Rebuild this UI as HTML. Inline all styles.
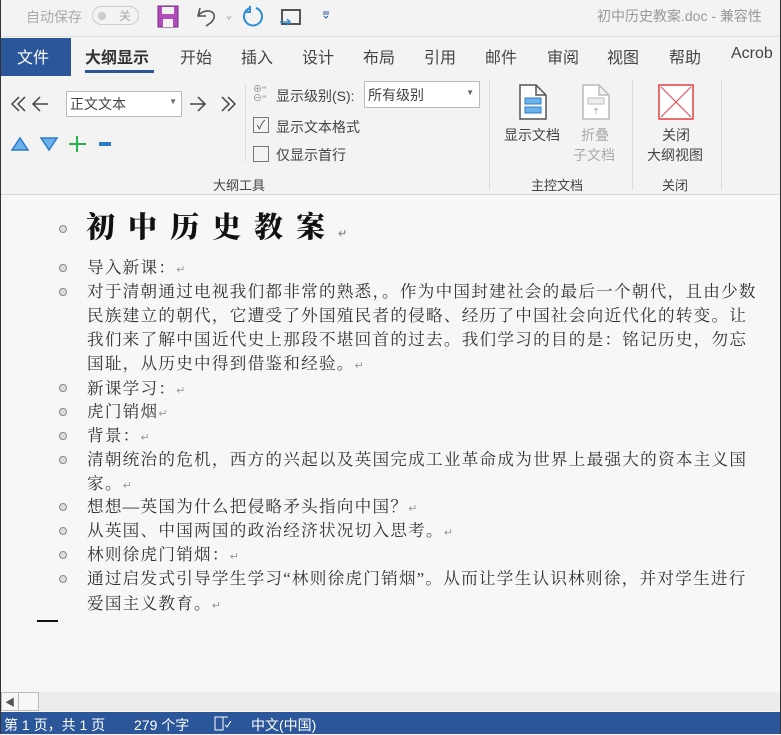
<!DOCTYPE html>
<html><head><meta charset="utf-8"><style>
*{margin:0;padding:0;box-sizing:border-box}
body{width:781px;height:734px;overflow:hidden;background:#f7f7f7;font-family:"Liberation Sans","Noto Sans CJK SC",sans-serif;position:relative;color:#444}
.a{position:absolute;white-space:nowrap}
.ui{font-size:14px;color:#444}
.d{position:absolute;left:87px;white-space:nowrap;font-family:"Liberation Serif","Noto Serif CJK SC",serif;font-size:16.6px;line-height:20px;color:#333;letter-spacing:1.25px}
.b{position:absolute;left:59px;width:8px;height:8px;border:1px solid #888;border-radius:50%;background:#ddd}
.r{color:#999;font-size:11px;letter-spacing:0}
</style></head><body>
<div class="a" style="left:0;top:0;width:781px;height:37px;background:#f3f3f3;border-bottom:1px solid #ddd"></div>
<div class="a ui" style="left:26px;top:7px;color:#aaa">自动保存</div>
<div class="a" style="left:92px;top:6px;width:47px;height:19px;border:1px solid #ccc;border-radius:10px;"></div>
<div class="a" style="left:98px;top:12px;width:8px;height:8px;border-radius:50%;background:#ccc"></div>
<div class="a" style="left:119px;top:7px;font-size:12px;color:#aaa">关</div>
<svg class="a" style="left:157px;top:5px" width="22" height="23"><rect x="1" y="1" width="20" height="21" fill="#b04dbb" stroke="#7a2a85"/><rect x="5" y="2" width="12" height="7" fill="#f3f3f3"/><rect x="6" y="14" width="10" height="8" fill="#f3f3f3"/></svg>
<svg class="a" style="left:194px;top:4px" width="40" height="24"><path d="M6 4 L4 12 L12 12 M4 12 C10 4 22 6 20 14 C19 18 15 20 12 22" fill="none" stroke="#555" stroke-width="1.6"/><path d="M33 12 l2 3 2-3" stroke="#aaa" fill="none"/></svg>
<svg class="a" style="left:242px;top:5px" width="24" height="24"><path d="M8 3 A9 9 0 1 0 14 3" fill="none" stroke="#2d8fd5" stroke-width="2"/><path d="M8 1 v6 h-5" fill="none" stroke="#2d8fd5" stroke-width="2"/></svg>
<svg class="a" style="left:279px;top:7px" width="24" height="22"><rect x="3" y="3" width="18" height="14" fill="none" stroke="#555" stroke-width="2"/><path d="M1 15 h10 M8 12 l3 3 -3 3" stroke="#2d8fd5" stroke-width="1.5" fill="none"/></svg>
<svg class="a" style="left:321px;top:10px" width="10" height="10"><path d="M2 2h6M2 4h6M3 6l2 2 2-2" stroke="#2d5ea0" fill="none"/></svg>
<div class="a ui" style="left:597px;top:6px;color:#999;font-size:14px">初中历史教案.doc  -  兼容性</div>
<!-- tabs -->
<div class="a" style="left:0;top:38px;width:781px;height:38px;background:#f3f3f3"></div>
<div class="a" style="left:1px;top:38px;width:70px;height:38px;background:#2b579a;color:#fff;font-size:16px;padding:6px 0 0 16px">文件</div>
<div class="a" style="left:85px;top:44px;font-size:16px;font-weight:bold;color:#333">大纲显示</div>
<div class="a" style="left:85px;top:70px;width:69px;height:3px;background:#2b579a"></div>
<div class="a" style="left:180px;top:44px;font-size:16px">开始</div>
<div class="a" style="left:241px;top:44px;font-size:16px">插入</div>
<div class="a" style="left:302px;top:44px;font-size:16px">设计</div>
<div class="a" style="left:363px;top:44px;font-size:16px">布局</div>
<div class="a" style="left:424px;top:44px;font-size:16px">引用</div>
<div class="a" style="left:485px;top:44px;font-size:16px">邮件</div>
<div class="a" style="left:547px;top:44px;font-size:16px">审阅</div>
<div class="a" style="left:607px;top:44px;font-size:16px">视图</div>
<div class="a" style="left:669px;top:44px;font-size:16px">帮助</div>
<div class="a" style="left:731px;top:45px;font-size:16px">Acrob</div>
<!-- ribbon -->
<div class="a" style="left:0;top:76px;width:781px;height:119px;background:#f3f3f3;border-bottom:1px solid #d6d6d6"></div>
<svg class="a" style="left:10px;top:94px" width="50" height="20"><path d="M9 3 L2 10 L9 17 M15 3 L8 10 L15 17 M30 3 L23 10 L30 17 M23 10 H38" stroke="#444" stroke-width="1.5" fill="none"/></svg>
<div class="a" style="left:66px;top:91px;width:116px;height:26px;border:1px solid #bbb;background:#fff;font-size:14px;padding:2px 3px">正文文本<span style="position:absolute;right:4px;top:5px;font-size:8px;color:#666">▼</span></div>
<svg class="a" style="left:188px;top:94px" width="52" height="20"><path d="M2 10 H17 M10 3 L17 10 L10 17 M34 3 L41 10 L34 17 M40 3 L47 10 L40 17" stroke="#444" stroke-width="1.5" fill="none"/></svg>
<svg class="a" style="left:10px;top:134px" width="110" height="20"><path d="M2 16 L10 4 L18 16Z" fill="#6cb2ea" stroke="#2a7cc4" stroke-width="1.5"/><path d="M31 4 L47 4 L39 16Z" fill="#6cb2ea" stroke="#2a7cc4" stroke-width="1.5"/><path d="M67 2 v16 M59 10 h17" stroke="#2cb14f" stroke-width="2"/><path d="M89 10 h12" stroke="#2a7cc4" stroke-width="4"/></svg>
<div class="a" style="left:245px;top:84px;width:1px;height:78px;background:#ddd"></div>
<div class="a" style="left:253px;top:85px;font-size:9px;color:#888;line-height:9px">⊕⁼<br>⊖⁼</div>
<div class="a ui" style="left:276px;top:86px">显示级别(S):</div>
<div class="a" style="left:364px;top:81px;width:116px;height:27px;border:1px solid #bbb;background:#fff;font-size:14px;padding:3px 3px">所有级别<span style="position:absolute;right:5px;top:6px;font-size:8px;color:#666">▼</span></div>
<div class="a" style="left:253px;top:117px;width:16px;height:16px;border:1px solid #777;font-size:12px;line-height:14px;text-align:center;color:#444">✓</div>
<div class="a ui" style="left:276px;top:117px">显示文本格式</div>
<div class="a" style="left:253px;top:146px;width:16px;height:16px;border:1px solid #777"></div>
<div class="a ui" style="left:276px;top:145px">仅显示首行</div>
<div class="a ui" style="left:213px;top:175px;font-size:13px">大纲工具</div>
<div class="a" style="left:489px;top:80px;width:1px;height:110px;background:#ddd"></div>
<svg class="a" style="left:518px;top:84px" width="30" height="36"><path d="M2 1 H18 L28 11 V35 H2Z M18 1 V11 H28" fill="#fff" stroke="#555" stroke-width="1.5"/><rect x="7" y="14" width="16" height="6" fill="#6cb2ea" stroke="#2a7cc4"/><rect x="7" y="23" width="16" height="6" fill="#6cb2ea" stroke="#2a7cc4"/></svg>
<svg class="a" style="left:581px;top:84px" width="30" height="36"><path d="M2 1 H18 L28 11 V35 H2Z M18 1 V11 H28" fill="#fff" stroke="#bbb" stroke-width="1.5"/><rect x="7" y="14" width="16" height="6" fill="#eee" stroke="#bbb"/><path d="M15 30 v-6 M13 26 l2-2 2 2" stroke="#bbb" fill="none"/></svg>
<div class="a ui" style="left:504px;top:125px">显示文档</div>
<div class="a ui" style="left:581px;top:125px;color:#aaa">折叠</div>
<div class="a ui" style="left:573px;top:145px;color:#aaa">子文档</div>
<div class="a ui" style="left:531px;top:175px;font-size:13px">主控文档</div>
<div class="a" style="left:632px;top:80px;width:1px;height:110px;background:#ddd"></div>
<svg class="a" style="left:658px;top:84px" width="37" height="36"><rect x="1" y="1" width="34" height="34" fill="#fff" stroke="#e04040" stroke-width="1.5"/><path d="M3 3 L33 33 M33 3 L3 33" stroke="#e04040" stroke-width="1"/></svg>
<div class="a ui" style="left:662px;top:125px">关闭</div>
<div class="a ui" style="left:647px;top:145px">大纲视图</div>
<div class="a ui" style="left:662px;top:175px;font-size:13px">关闭</div>
<div class="a" style="left:721px;top:80px;width:1px;height:110px;background:#ddd"></div>
<!-- document -->
<div class="b" style="top:225px"></div>
<div class="a" style="left:86px;top:210px;font-family:'Liberation Serif','Noto Serif CJK SC',serif;font-size:29px;line-height:36px;font-weight:900;color:#111;letter-spacing:13px">初中历史教案<span class="r">↵</span></div>
<div class="b" style="top:264px"></div>
<div class="b" style="top:288px"></div>
<div class="b" style="top:384px"></div>
<div class="b" style="top:408px"></div>
<div class="b" style="top:432px"></div>
<div class="b" style="top:456px"></div>
<div class="b" style="top:503px"></div>
<div class="b" style="top:527px"></div>
<div class="b" style="top:551px"></div>
<div class="b" style="top:575px"></div>
<div class="d" style="top:258px">导入新课：<span class="r">↵</span></div>
<div class="d" style="top:282px">对于清朝通过电视我们都非常的熟悉，。作为中国封建社会的最后一个朝代，且由少数</div>
<div class="d" style="top:306px">民族建立的朝代，它遭受了外国殖民者的侵略、经历了中国社会向近代化的转变。让</div>
<div class="d" style="top:330px">我们来了解中国近代史上那段不堪回首的过去。我们学习的目的是：铭记历史，勿忘</div>
<div class="d" style="top:354px">国耻，从历史中得到借鉴和经验。<span class="r">↵</span></div>
<div class="d" style="top:379px">新课学习：<span class="r">↵</span></div>
<div class="d" style="top:402px">虎门销烟<span class="r">↵</span></div>
<div class="d" style="top:426px">背景：<span class="r">↵</span></div>
<div class="d" style="top:450px">清朝统治的危机，西方的兴起以及英国完成工业革命成为世界上最强大的资本主义国</div>
<div class="d" style="top:474px">家。<span class="r">↵</span></div>
<div class="d" style="top:497px">想想—英国为什么把侵略矛头指向中国？<span class="r">↵</span></div>
<div class="d" style="top:521px">从英国、中国两国的政治经济状况切入思考。<span class="r">↵</span></div>
<div class="d" style="top:545px">林则徐虎门销烟：<span class="r">↵</span></div>
<div class="d" style="top:569px">通过启发式引导学生学习“林则徐虎门销烟”。从而让学生认识林则徐，并对学生进行</div>
<div class="d" style="top:594px">爱国主义教育。<span class="r">↵</span></div>
<div class="a" style="left:37px;top:620px;width:21px;height:2px;background:#111"></div>
<!-- scrollbar -->
<div class="a" style="left:0;top:692px;width:781px;height:19px;background:#ececec"></div>
<div class="a" style="left:1px;top:692px;width:38px;height:19px;border:1px solid #bbb;background:#f7f7f7"></div>
<div class="a" style="left:18px;top:692px;width:1px;height:19px;background:#bbb"></div>
<div class="a" style="left:5px;top:694px;font-size:10px;color:#555">◀</div>
<!-- status -->
<div class="a" style="left:0;top:712px;width:781px;height:22px;background:#2b579a;color:#fff;font-size:14px;padding-top:3px">
<span style="position:absolute;left:4px">第 1 页，共 1 页</span><span style="position:absolute;left:134px">279 个字</span>
<svg style="position:absolute;left:214px;top:4px" width="18" height="15"><path d="M1 1 h8 v13 h-8z M9 1 h5 M11 9 l2 2 4-6" stroke="#fff" fill="none"/></svg>
<span style="position:absolute;left:251px">中文(中国)</span></div>
<div class="a" style="left:0;top:0;width:1px;height:734px;background:#333"></div>
<div class="a" style="left:780px;top:0;width:1px;height:734px;background:#333"></div>
</body></html>
